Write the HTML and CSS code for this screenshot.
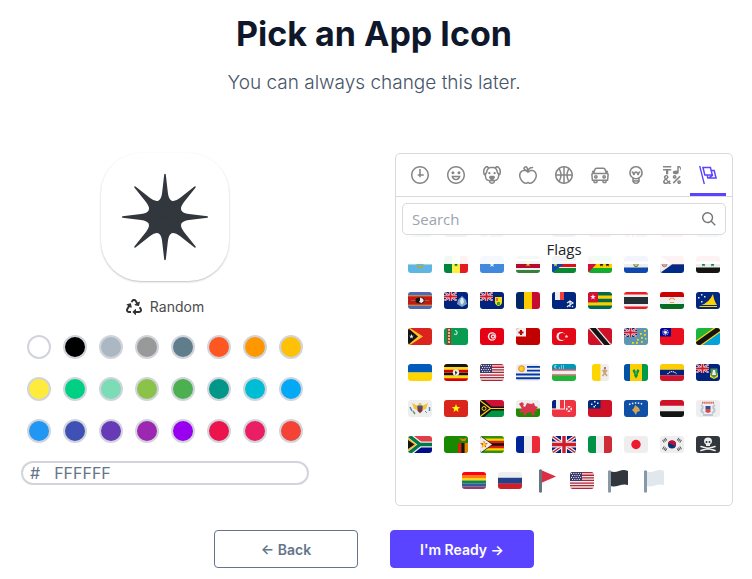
FILE: index.html
```html
<!DOCTYPE html>
<html lang="en">
<head>
    <meta charset="UTF-8">
    <meta name="viewport" content="width=device-width, initial-scale=1.0">
    <title>Pick an App Icon</title>
    <link rel="stylesheet" href="styles.css">
</head>
<body>

    <!-- Shapes shared by several flags -->
    <svg class="sprite" aria-hidden="true">
        <symbol id="uj" viewBox="0 0 24 17" preserveAspectRatio="none">
            <path fill="#00247d" d="M0 0h24v17H0z"/>
            <path stroke="#eee" stroke-width="3.6" d="M0 0l24 17M24 0L0 17"/>
            <path stroke="#cf1b2b" stroke-width="1.4" d="M0 0l24 17M24 0L0 17"/>
            <path stroke="#eee" stroke-width="6" d="M12 0v17M0 8.5h24"/>
            <path stroke="#cf1b2b" stroke-width="3.4" d="M12 0v17M0 8.5h24"/>
        </symbol>
        <symbol id="star" viewBox="-5 -5 10 10">
            <path d="M0-5l1.2 3.4 3.6.1L1.9.6l1 3.4L0 2l-2.9 2 1-3.4-2.9-2.1 3.6-.1z"/>
        </symbol>
        <symbol id="usa" viewBox="0 0 24 17">
            <path fill="#b22334" d="M0 0h24v1.3H0zM0 2.6h24v1.3H0zM0 5.2h24v1.3H0zM0 7.8h24v1.3H0zM0 10.4h24v1.3H0zM0 13h24v1.3H0zM0 15.7h24V17H0z"/>
            <path fill="#3c3b6e" d="M0 0h12v9.1H0z"/>
            <path stroke="#eee" stroke-width="1" stroke-dasharray="1 1.3" d="M1 1.5h10M2 3.5h9M1 5.5h10M2 7.5h9"/>
        </symbol>
    </svg>

    <div class="page">
        <header class="header">
            <h1>Pick an App Icon</h1>
            <p>You can always change this later.</p>
        </header>

        <main class="picker">
            <section class="design">
                <div class="app-icon">
                    <svg viewBox="-50 -50 100 100" width="100" height="100" fill="#31373d">
                        <circle r="17"/>
                        <g id="pair">
                            <path id="r" d="M0 1L-6.75-16.3Q-3.74-17.5-2.9-24L-.8-42.5Q0-44 .8-42.5L2.9-24Q3.74-17.5 6.75-16.3z"/>
                            <use href="#r" transform="rotate(45)"/>
                        </g>
                        <use href="#pair" transform="rotate(90)"/>
                        <use href="#pair" transform="rotate(180)"/>
                        <use href="#pair" transform="rotate(270)"/>
                    </svg>
                </div>

                <button class="random" type="button">
                    <svg viewBox="0 0 512 512" width="16" height="16" fill="#333"><path d="M184.561 261.903c3.232 13.997-12.123 24.635-24.068 17.168l-40.736-25.455-50.867 81.402C55.606 356.273 70.96 384 96.012 384H148c6.627 0 12 5.373 12 12v40c0 6.627-5.373 12-12 12H96.115c-75.334 0-121.302-83.048-81.408-146.88l50.822-81.388-40.725-25.448c-12.081-7.547-8.966-25.961 4.879-29.158l110.237-25.45c8.611-1.988 17.201 3.381 19.189 11.99l25.452 110.237zm98.561-182.915l41.289 66.076-40.74 25.457c-12.051 7.528-9 25.953 4.879 29.158l110.237 25.45c8.672 1.999 17.215-3.438 19.189-11.99l25.45-110.237c3.197-13.844-11.99-24.719-24.068-17.168l-40.687 25.424-41.263-66.082c-37.521-60.033-125.209-60.171-162.816 0l-17.963 28.766c-3.51 5.62-1.8 13.021 3.82 16.533l33.919 21.195c5.62 3.512 13.024 1.803 16.536-3.817l17.961-28.743c12.712-20.341 41.973-19.676 54.257-.022zM497.288 301.12l-27.515-44.065c-3.511-5.623-10.916-7.334-16.538-3.821l-33.861 21.159c-5.62 3.512-7.33 10.915-3.818 16.536l27.564 44.112c13.257 21.211-2.057 48.96-27.136 48.96H320V336.02c0-14.213-17.242-21.383-27.313-11.313l-80 79.981c-6.249 6.248-6.249 16.379 0 22.627l80 79.989C302.689 517.308 320 510.3 320 495.989V448h95.88c75.274 0 121.335-82.997 81.408-146.88z"/></svg>
                    Random
                </button>

                <div class="swatches">
                    <button class="swatch white" type="button" aria-label="White"></button>
                    <button class="swatch black" type="button" aria-label="Black"></button>
                    <button class="swatch silver" type="button" aria-label="Silver"></button>
                    <button class="swatch gray" type="button" aria-label="Gray"></button>
                    <button class="swatch slate" type="button" aria-label="Slate"></button>
                    <button class="swatch deep-orange" type="button" aria-label="Deep orange"></button>
                    <button class="swatch orange" type="button" aria-label="Orange"></button>
                    <button class="swatch amber" type="button" aria-label="Amber"></button>
                    <button class="swatch yellow" type="button" aria-label="Yellow"></button>
                    <button class="swatch emerald" type="button" aria-label="Emerald"></button>
                    <button class="swatch mint" type="button" aria-label="Mint"></button>
                    <button class="swatch lime" type="button" aria-label="Lime"></button>
                    <button class="swatch green" type="button" aria-label="Green"></button>
                    <button class="swatch teal" type="button" aria-label="Teal"></button>
                    <button class="swatch cyan" type="button" aria-label="Cyan"></button>
                    <button class="swatch sky" type="button" aria-label="Sky"></button>
                    <button class="swatch blue" type="button" aria-label="Blue"></button>
                    <button class="swatch indigo" type="button" aria-label="Indigo"></button>
                    <button class="swatch deep-purple" type="button" aria-label="Deep purple"></button>
                    <button class="swatch purple" type="button" aria-label="Purple"></button>
                    <button class="swatch violet" type="button" aria-label="Violet"></button>
                    <button class="swatch crimson" type="button" aria-label="Crimson"></button>
                    <button class="swatch pink" type="button" aria-label="Pink"></button>
                    <button class="swatch red" type="button" aria-label="Red"></button>
                </div>

                <div class="hex">
                    <label for="hex">#</label>
                    <input type="text" id="hex" value="FFFFFF">
                </div>
            </section>

            <section class="emoji-panel">
                <nav class="tabs">
                    <button class="tab" type="button" aria-label="Recent"><svg viewBox="0 0 24 24"><path d="M13 4h-2l-.001 7H9v2h2v2h2v-2h4v-2h-4z"/><path d="M12 0C5.373 0 0 5.373 0 12s5.373 12 12 12 12-5.373 12-12S18.627 0 12 0m0 22C6.486 22 2 17.514 2 12S6.486 2 12 2s10 4.486 10 10-4.486 10-10 10"/></svg></button>
                    <button class="tab" type="button" aria-label="Smileys"><svg viewBox="0 0 24 24"><path d="M12 0C5.373 0 0 5.373 0 12s5.373 12 12 12 12-5.373 12-12S18.627 0 12 0m0 22C6.486 22 2 17.514 2 12S6.486 2 12 2s10 4.486 10 10-4.486 10-10 10"/><path d="M8 7a2 2 0 1 0-.001 3.999A2 2 0 0 0 8 7M16 7a2 2 0 1 0-.001 3.999A2 2 0 0 0 16 7M15.232 15c-.693 1.195-1.87 2-3.349 2-1.477 0-2.655-.805-3.347-2H15m3-2H6a6 6 0 1 0 12 0"/></svg></button>
                    <button class="tab" type="button" aria-label="Animals"><svg viewBox="0 0 24 24"><path d="M15.5 8a1.5 1.5 0 1 0 .001 3.001A1.5 1.5 0 0 0 15.5 8M8.5 8a1.5 1.5 0 1 0 .001 3.001A1.5 1.5 0 0 0 8.5 8"/><path d="M18.933 0h-.027c-.97 0-2.138.787-3.018 1.497-1.274-.374-2.612-.51-3.887-.51-1.285 0-2.616.133-3.874.517C7.245.79 6.069 0 5.093 0h-.027C3.352 0 .07 2.67.002 7.026c-.039 2.479.276 4.238 1.04 5.013.254.258.882.677 1.295.882.191 3.177.922 5.238 2.536 6.38.897.637 2.187.949 3.2 1.102C8.04 20.6 8 20.795 8 21c0 1.773 2.35 3 4 3 1.648 0 4-1.227 4-3 0-.201-.038-.393-.072-.586 2.573-.385 5.435-1.877 5.925-7.587.396-.22.887-.568 1.104-.788.763-.774 1.079-2.534 1.04-5.013C23.929 2.67 20.646 0 18.933 0M3.223 9.135c-.237.281-.837 1.155-.884 1.238-.15-.41-.368-1.349-.337-3.291.051-3.281 2.478-4.972 3.091-5.031.256.015.731.27 1.265.646-1.11 1.171-2.275 2.915-2.352 5.125-.133.546-.398.858-.783 1.313M12 22c-.901 0-1.954-.693-2-1 0-.654.475-1.236 1-1.602V20a1 1 0 1 0 2 0v-.602c.524.365 1 .947 1 1.602-.046.307-1.099 1-2 1m3-3.48v.02a4.752 4.752 0 0 0-1.262-1.02c1.092-.516 2.239-1.334 2.239-2.217 0-1.842-1.781-2.195-3.977-2.195-2.196 0-3.978.354-3.978 2.195 0 .883 1.148 1.701 2.238 2.217A4.8 4.8 0 0 0 9 18.539v-.025c-1-.076-2.182-.281-2.973-.842-1.301-.92-1.838-3.045-1.853-6.478l.023-.041c.496-.826 1.49-1.45 1.804-3.102 0-2.047 1.357-3.631 2.362-4.522C9.37 3.178 10.555 3 11.948 3c1.447 0 2.685.192 3.733.57 1 .9 2.316 2.465 2.316 4.48.313 1.651 1.307 2.275 1.803 3.102.035.058.068.117.102.178-.059 5.967-1.949 7.01-4.902 7.19m6.628-8.202c-.037-.065-.074-.13-.113-.195a7.587 7.587 0 0 0-.739-.987c-.385-.455-.648-.768-.782-1.313-.076-2.209-1.241-3.954-2.353-5.124.531-.376 1.004-.63 1.261-.647.636.071 3.044 1.764 3.096 5.031.027 1.81-.347 3.218-.37 3.235"/></svg></button>
                    <button class="tab" type="button" aria-label="Food"><svg viewBox="0 0 24 24"><path d="M17 4.978c-1.838 0-2.876.396-3.68.934.513-1.172 1.768-2.934 4.68-2.934a1 1 0 0 0 0-2c-2.921 0-4.629 1.365-5.547 2.512-.064.078-.119.162-.18.244C11.73 1.838 10.798.023 9.207.023 8.579.022 7.85.306 7 .978 5.027 2.54 5.329 3.902 6.492 4.999 3.609 5.222 0 7.352 0 12.969c0 4.582 4.961 11.009 9 11.009 1.975 0 2.371-.486 3-1 .629.514 1.025 1 3 1 4.039 0 9-6.418 9-11 0-5.953-4.055-8-7-8M8.242 2.546c.641-.508.943-.523.965-.523.426.169.975 1.405 1.357 3.055-1.527-.629-2.741-1.352-2.98-1.846.059-.112.241-.356.658-.686M15 21.978c-1.08 0-1.21-.109-1.559-.402l-.176-.146c-.367-.302-.816-.452-1.266-.452s-.898.15-1.266.452l-.176.146c-.347.292-.477.402-1.557.402-2.813 0-7-5.389-7-9.009 0-5.823 4.488-5.991 5-5.991 1.939 0 2.484.471 3.387 1.251l.323.276a1.995 1.995 0 0 0 2.58 0l.323-.276c.902-.78 1.447-1.251 3.387-1.251.512 0 5 .168 5 6 0 3.617-4.187 9-7 9"/></svg></button>
                    <button class="tab" type="button" aria-label="Activities"><svg viewBox="0 0 24 24"><path d="M12 0C5.373 0 0 5.372 0 12c0 6.627 5.373 12 12 12 6.628 0 12-5.373 12-12 0-6.628-5.372-12-12-12m9.949 11H17.05c.224-2.527 1.232-4.773 1.968-6.113A9.966 9.966 0 0 1 21.949 11M13 11V2.051a9.945 9.945 0 0 1 4.432 1.564c-.858 1.491-2.156 4.22-2.392 7.385H13zm-2 0H8.961c-.238-3.165-1.536-5.894-2.393-7.385A9.95 9.95 0 0 1 11 2.051V11zm0 2v8.949a9.937 9.937 0 0 1-4.432-1.564c.857-1.492 2.155-4.221 2.393-7.385H11zm4.04 0c.236 3.164 1.534 5.893 2.392 7.385A9.92 9.92 0 0 1 13 21.949V13h2.04zM4.982 4.887C5.718 6.227 6.726 8.473 6.951 11h-4.9a9.977 9.977 0 0 1 2.931-6.113M2.051 13h4.9c-.226 2.527-1.233 4.771-1.969 6.113A9.972 9.972 0 0 1 2.051 13m16.967 6.113c-.735-1.342-1.744-3.586-1.968-6.113h4.899a9.961 9.961 0 0 1-2.931 6.113"/></svg></button>
                    <button class="tab" type="button" aria-label="Travel"><svg viewBox="0 0 24 24"><path d="M6.5 12C5.122 12 4 13.121 4 14.5S5.122 17 6.5 17 9 15.879 9 14.5 7.878 12 6.5 12m0 3c-.275 0-.5-.225-.5-.5s.225-.5.5-.5.5.225.5.5-.225.5-.5.5M17.5 12c-1.378 0-2.5 1.121-2.5 2.5s1.122 2.5 2.5 2.5 2.5-1.121 2.5-2.5-1.122-2.5-2.5-2.5m0 3c-.275 0-.5-.225-.5-.5s.225-.5.5-.5.5.225.5.5-.225.5-.5.5"/><path d="M22.482 9.494l-1.039-.346L21.4 9h.6c.552 0 1-.439 1-.992 0-.006-.003-.008-.003-.008H23c0-1-.889-2-1.984-2h-.642l-.731-1.717C19.262 3.012 18.091 2 16.764 2H7.236C5.909 2 4.738 3.012 4.357 4.283L3.626 6h-.642C1.889 6 1 7 1 8h.003S1 8.002 1 8.008C1 8.561 1.448 9 2 9h.6l-.043.148-1.039.346a2.001 2.001 0 0 0-1.359 2.097l.751 7.508a1 1 0 0 0 .994.901H3v1c0 1.103.896 2 2 2h2c1.104 0 2-.897 2-2v-1h6v1c0 1.103.896 2 2 2h2c1.104 0 2-.897 2-2v-1h1.096a.999.999 0 0 0 .994-.901l.751-7.508a2.001 2.001 0 0 0-1.359-2.097M6.273 4.857C6.402 4.43 6.788 4 7.236 4h9.527c.448 0 .834.43.963.857L19.313 9H4.688l1.585-4.143zM7 21H5v-1h2v1zm12 0h-2v-1h2v1zm2.189-3H2.811l-.662-6.607L3 11h18l.852.393L21.189 18z"/></svg></button>
                    <button class="tab" type="button" aria-label="Objects"><svg viewBox="0 0 24 24"><path d="M12 0a9 9 0 0 0-5 16.482V21s2.035 3 5 3 5-3 5-3v-4.518A9 9 0 0 0 12 0zm0 2c3.86 0 7 3.141 7 7s-3.14 7-7 7-7-3.141-7-7 3.14-7 7-7zM9 17.477c.94.332 1.946.523 3 .523s2.06-.19 3-.523v.834c-.91.436-1.925.689-3 .689a6.924 6.924 0 0 1-3-.69v-.833zm.236 3.07A8.854 8.854 0 0 0 12 21c.965 0 1.888-.167 2.758-.451C14.155 21.173 13.153 22 12 22c-1.102 0-2.117-.789-2.764-1.453z"/><path d="M14.745 12.449h-.004c-.852-.024-1.188-.858-1.577-1.824-.421-1.061-.703-1.561-1.182-1.566h-.009c-.481 0-.783.497-1.235 1.537-.436.982-.801 1.811-1.636 1.791l-.276-.043c-.565-.171-.853-.691-1.284-1.794-.125-.313-.202-.632-.27-.913-.051-.213-.127-.53-.195-.634C7.067 9.004 7.039 9 6.99 9A1 1 0 0 1 7 7h.01c1.662.017 2.015 1.373 2.198 2.134.486-.981 1.304-2.058 2.797-2.075 1.531.018 2.28 1.153 2.731 2.141l.002-.008C14.944 8.424 15.327 7 16.979 7h.032A1 1 0 1 1 17 9h-.011c-.149.076-.256.474-.319.709a6.484 6.484 0 0 1-.311.951c-.429.973-.79 1.789-1.614 1.789"/></svg></button>
                    <button class="tab" type="button" aria-label="Symbols"><svg viewBox="0 0 24 24"><path d="M0 0h11v2H0zM4 11h3V6h4V4H0v2h4zM15.5 17c1.381 0 2.5-1.116 2.5-2.493s-1.119-2.493-2.5-2.493S13 13.13 13 14.507 14.119 17 15.5 17m0-2.986c.276 0 .5.222.5.493 0 .272-.224.493-.5.493s-.5-.221-.5-.493.224-.493.5-.493M21.5 19.014c-1.381 0-2.5 1.116-2.5 2.493S20.119 24 21.5 24s2.5-1.116 2.5-2.493-1.119-2.493-2.5-2.493m0 2.986a.497.497 0 0 1-.5-.493c0-.271.224-.493.5-.493s.5.222.5.493a.497.497 0 0 1-.5.493M22 13l-9 9 1.513 1.5 8.99-9.009zM17 11c2.209 0 4-1.119 4-2.5V2s.985-.161 1.498.949C23.01 4.055 23 6 23 6s1-1.119 1-3.135C24-.02 21 0 21 0h-2v6.347A5.853 5.853 0 0 0 17 6c-2.209 0-4 1.119-4 2.5s1.791 2.5 4 2.5M10.297 20.482l-1.475-1.585a47.54 47.54 0 0 1-1.442 1.129c-.307-.288-.989-1.016-2.045-2.183.902-.836 1.479-1.466 1.729-1.892s.376-.871.376-1.336c0-.592-.273-1.178-.818-1.759-.546-.581-1.329-.871-2.349-.871-1.008 0-1.79.293-2.344.879-.556.587-.832 1.181-.832 1.784 0 .813.419 1.748 1.256 2.805-.847.614-1.444 1.208-1.794 1.784a3.465 3.465 0 0 0-.523 1.833c0 .857.308 1.56.924 2.107.616.549 1.423.823 2.42.823 1.173 0 2.444-.379 3.813-1.137L8.235 24h2.819l-2.09-2.383 1.333-1.135zm-6.736-6.389a1.02 1.02 0 0 1 .73-.286c.31 0 .559.085.747.254a.849.849 0 0 1 .283.659c0 .518-.419 1.112-1.257 1.784-.536-.651-.805-1.231-.805-1.742a.901.901 0 0 1 .302-.669M3.74 22c-.427 0-.778-.116-1.057-.349-.279-.232-.418-.487-.418-.766 0-.594.509-1.288 1.527-2.083.968 1.134 1.717 1.946 2.248 2.438-.921.507-1.686.76-2.3.76"/></svg></button>
                    <button class="tab active" type="button" aria-label="Flags"><svg viewBox="0 0 24 24"><path d="M0 0l6.084 24H8L1.916 0zM21 5h-4l-1-4H4l3 12h3l1 4h13L21 5zM6.563 3h7.875l2 8H8.563l-2-8zm8.832 10l-2.856 1.904L12.063 13h3.332zM19 13l-1.5-6h1.938l2 8H16l3-2z"/></svg></button>
                </nav>

                <div class="search">
                    <input type="text" placeholder="Search" aria-label="Search">
                    <svg viewBox="0 0 20 20" width="14" height="14" fill="#777"><path d="M12.9 14.32a8 8 0 1 1 1.41-1.41l5.35 5.33-1.42 1.42-5.33-5.34zM8 14A6 6 0 1 0 8 2a6 6 0 0 0 0 12z"/></svg>
                </div>

                <div class="list">
                    <h2 class="category">Flags</h2>
                    <div class="emojis">
                        <!-- row hidden behind the category label -->
                        <button class="emoji" type="button" aria-label="Seychelles"><svg viewBox="0 0 24 17"><path fill="#141f8f" d="M0 0h8L0 17z"/><path fill="#007a3d" d="M0 17l24-5v5z"/></svg></button>
                        <button class="emoji" type="button" aria-label="Sudan"><svg viewBox="0 0 24 17"><path fill="#d21034" d="M0 0h24v6H0z"/><path fill="#141414" d="M0 11h24v6H0z"/></svg></button>
                        <button class="emoji" type="button" aria-label="Sweden"><svg viewBox="0 0 24 17"><path fill="#1b6aa5" d="M0 0h24v17H0z"/><path fill="#fecd00" d="M7 0h4v17H7zM0 7h24v3H0z"/></svg></button>
                        <button class="emoji" type="button" aria-label="Singapore"><svg viewBox="0 0 24 17"><path fill="#ed2939" d="M0 0h24v8H0z"/></svg></button>
                        <button class="emoji" type="button" aria-label="St. Helena"><svg viewBox="0 0 24 17"><path fill="#00247d" d="M0 0h24v17H0z"/></svg></button>
                        <button class="emoji" type="button" aria-label="Slovenia"><svg viewBox="0 0 24 17"><path fill="#005da4" d="M0 6h24v5H0z"/><path fill="#ed1c23" d="M0 11h24v6H0z"/></svg></button>
                        <button class="emoji" type="button" aria-label="Svalbard"><svg viewBox="0 0 24 17"><path fill="#ef2b2d" d="M0 0h24v17H0z"/><path fill="#eee" d="M6 0h6v17H6z"/><path fill="#002868" d="M8 0h2v17H8z"/></svg></button>
                        <button class="emoji" type="button" aria-label="Slovakia"><svg viewBox="0 0 24 17"><path fill="#0b4ea2" d="M0 6h24v5H0z"/><path fill="#ee1c25" d="M0 11h24v6H0z"/></svg></button>
                        <button class="emoji" type="button" aria-label="Sierra Leone"><svg viewBox="0 0 24 17"><path fill="#1eb53a" d="M0 0h24v6H0z"/><path fill="#0072c6" d="M0 11h24v6H0z"/></svg></button>

                        <button class="emoji" type="button" aria-label="San Marino"><svg viewBox="0 0 24 17"><path fill="#5eb6e4" d="M0 8.5h24V17H0z"/><circle cx="12" cy="8.5" r="3.5" fill="#8fb27d"/><circle cx="12" cy="8" r="2" fill="#5eb6e4"/><path stroke="#c9a02b" d="M9 11q3 2 6 0" fill="none"/></svg></button>
                        <button class="emoji" type="button" aria-label="Senegal"><svg viewBox="0 0 24 17"><path fill="#00853f" d="M0 0h8v17H0z"/><path fill="#fdef42" d="M8 0h8v17H8z"/><path fill="#e31b23" d="M16 0h8v17h-8z"/><use href="#star" x="9.5" y="6" width="5" height="5" fill="#00853f"/></svg></button>
                        <button class="emoji" type="button" aria-label="Somalia"><svg viewBox="0 0 24 17"><path fill="#4189dd" d="M0 0h24v17H0z"/><use href="#star" x="9" y="5.5" width="6" height="6" fill="#eee"/></svg></button>
                        <button class="emoji" type="button" aria-label="Suriname"><svg viewBox="0 0 24 17"><path fill="#377e3f" d="M0 0h24v3H0zM0 14h24v3H0z"/><path fill="#b40a2d" d="M0 5h24v7H0z"/><use href="#star" x="9" y="5" width="6" height="6" fill="#ecc81d"/></svg></button>
                        <button class="emoji" type="button" aria-label="South Sudan"><svg viewBox="0 0 24 17"><path fill="#141414" d="M0 0h24v5H0z"/><path fill="#da121a" d="M0 6h24v5H0z"/><path fill="#078930" d="M0 12h24v5H0z"/><path fill="#0f47af" d="M0 0l11 8.5L0 17z"/><use href="#star" x="1" y="6" width="5" height="5" fill="#fcdd09"/></svg></button>
                        <button class="emoji" type="button" aria-label="São Tomé"><svg viewBox="0 0 24 17"><path fill="#12ad2b" d="M0 0h24v17H0z"/><path fill="#ffce00" d="M0 5h24v7H0z"/><path fill="#d21034" d="M0 0l8 8.5L0 17z"/><use href="#star" x="11" y="6" width="5" height="5" fill="#141414"/><use href="#star" x="17" y="6" width="5" height="5" fill="#141414"/></svg></button>
                        <button class="emoji" type="button" aria-label="El Salvador"><svg viewBox="0 0 24 17"><path fill="#0f47af" d="M0 0h24v5.5H0zM0 11.5h24V17H0z"/><circle cx="12" cy="8.5" r="2.2" fill="#d3c35a" stroke="#4d8c58"/></svg></button>
                        <button class="emoji" type="button" aria-label="Sint Maarten"><svg viewBox="0 0 24 17"><path fill="#dc171d" d="M0 0h24v8.5H0z"/><path fill="#012a87" d="M0 8.5h24V17H0z"/><path fill="#eee" d="M0 0l12 8.5L0 17z"/><circle cx="4.5" cy="8.5" r="2.3" fill="#b8a7c9" stroke="#d9774c"/></svg></button>
                        <button class="emoji" type="button" aria-label="Syria"><svg viewBox="0 0 24 17"><path fill="#ce1126" d="M0 0h24v5.5H0z"/><path fill="#141414" d="M0 11.5h24V17H0z"/><use href="#star" x="5" y="6" width="5" height="5" fill="#007a3d"/><use href="#star" x="14" y="6" width="5" height="5" fill="#007a3d"/></svg></button>

                        <button class="emoji" type="button" aria-label="Eswatini"><svg viewBox="0 0 24 17"><path fill="#5067b1" d="M0 0h24v17H0z"/><path fill="#ffb92e" d="M0 3.5h24v10H0z"/><path fill="#c41a14" d="M0 4.2h24v8.6H0z"/><path stroke="#8e6b45" d="M3 8.5h18"/><ellipse cx="12" cy="8.5" rx="4.5" ry="3" fill="#141414"/><path fill="#eee" d="M12 5.5q4.500 1 3.500 4l-2 1.500-2.500-1 1-1.500z"/></svg></button>
                        <button class="emoji" type="button" aria-label="Tristan da Cunha"><svg viewBox="0 0 24 17"><path fill="#00247d" d="M0 0h24v17H0z"/><use href="#uj" width="13" height="9"/><path fill="#7ba3c9" d="M14 8l4-4 4 4 1 4-5 3-5-3z"/><path fill="#dfe8ee" d="M17 6h2l1 4-2 3-2-3z"/></svg></button>
                        <button class="emoji" type="button" aria-label="Turks and Caicos"><svg viewBox="0 0 24 17"><path fill="#00247d" d="M0 0h24v17H0z"/><use href="#uj" width="13" height="9"/><path fill="#fcdd09" d="M15 5h7v5q0 3-3.5 4Q15 13 15 10z"/><path fill="#d9762f" d="M16 6h2v3h-2z"/><path fill="#36a34a" d="M17 10h3v3h-3z"/></svg></button>
                        <button class="emoji" type="button" aria-label="Chad"><svg viewBox="0 0 24 17"><path fill="#002664" d="M0 0h8v17H0z"/><path fill="#fecb00" d="M8 0h8v17H8z"/><path fill="#c60c30" d="M16 0h8v17h-8z"/></svg></button>
                        <button class="emoji" type="button" aria-label="French Southern Territories"><svg viewBox="0 0 24 17"><path fill="#00267f" d="M0 0h24v17H0z"/><path fill="#eee" d="M3 0h9v8H3z"/><path fill="#f03f3f" d="M8 0h4v8H8z"/><path stroke="#eee" stroke-width="1.2" fill="none" d="M15 11l3-2 3 2-5 3M18 9v6M15 14l1 1M20 14l1 1"/></svg></button>
                        <button class="emoji" type="button" aria-label="Togo"><svg viewBox="0 0 24 17"><path fill="#006a4e" d="M0 0h24v17H0z"/><path fill="#ffce00" d="M0 3.4h24v3.4H0zM0 10.2h24v3.4H0z"/><path fill="#d21034" d="M0 0h10v10.2H0z"/><use href="#star" x="2" y="2" width="6" height="6" fill="#eee"/></svg></button>
                        <button class="emoji" type="button" aria-label="Thailand"><svg viewBox="0 0 24 17"><path fill="#eb1c24" d="M0 0h24v2.5H0zM0 14.5h24V17H0z"/><path fill="#272f36" d="M0 5h24v7H0z"/></svg></button>
                        <button class="emoji" type="button" aria-label="Tajikistan"><svg viewBox="0 0 24 17"><path fill="#c00" d="M0 0h24v5H0z"/><path fill="#066b24" d="M0 12h24v5H0z"/><path stroke="#ea9d4b" stroke-width="1.2" fill="none" d="M9 8q3-4 6 0M10 10.5h4"/></svg></button>
                        <button class="emoji" type="button" aria-label="Tokelau"><svg viewBox="0 0 24 17"><path fill="#00267f" d="M0 0h24v17H0z"/><path fill="#fed100" d="M17 2q1 7 4 11H5Q13 11 17 2zM3 14h18v1H4z"/><path fill="#eee" d="M5 2h1.5v1.5H5zM2 5h1.5v1.5H2zM8 4h1.5v1.5H8zM5 9h1.5v1.5H5z"/></svg></button>

                        <button class="emoji" type="button" aria-label="Timor-Leste"><svg viewBox="0 0 24 17"><path fill="#dc241f" d="M0 0h24v17H0z"/><path fill="#ffc726" d="M0 0h2l13 8.5L2 17H0z"/><path fill="#141414" d="M0 0l10 8.5L0 17z"/><use href="#star" x="1" y="6" width="5" height="5" fill="#eee"/></svg></button>
                        <button class="emoji" type="button" aria-label="Turkmenistan"><svg viewBox="0 0 24 17"><path fill="#089c50" d="M0 0h24v17H0z"/><path fill="#a43a2c" d="M3 0h4v17H3z"/><path stroke="#d9b98a" stroke-width="2" stroke-dasharray="2 1" d="M5 1v15"/><path stroke="#eee" fill="none" d="M11 2.5q3 0 2 3.5-1 1-3 0"/></svg></button>
                        <button class="emoji" type="button" aria-label="Tunisia"><svg viewBox="0 0 24 17"><path fill="#e70013" d="M0 0h24v17H0z"/><circle cx="12" cy="8.5" r="4.2" fill="#eee"/><circle cx="12.3" cy="8.5" r="3" fill="#e70013"/><circle cx="13" cy="8.5" r="2.2" fill="#eee"/><use href="#star" x="11.5" y="7" width="3" height="3" fill="#e70013"/></svg></button>
                        <button class="emoji" type="button" aria-label="Tonga"><svg viewBox="0 0 24 17"><path fill="#c10000" d="M0 0h24v17H0z"/><path fill="#eee" d="M0 0h10v8.5H0z"/><path fill="#c10000" d="M4 2h2v5H4zM2.5 3.5h5v2h-5z"/></svg></button>
                        <button class="emoji" type="button" aria-label="Turkey"><svg viewBox="0 0 24 17"><path fill="#e30917" d="M0 0h24v17H0z"/><circle cx="9" cy="8.5" r="4.5" fill="#eee"/><circle cx="10.3" cy="8.5" r="3.6" fill="#e30917"/><use href="#star" x="12.5" y="6.5" width="4" height="4" fill="#eee"/></svg></button>
                        <button class="emoji" type="button" aria-label="Trinidad and Tobago"><svg viewBox="0 0 24 17"><path fill="#ce1126" d="M0 0h24v17H0z"/><path stroke="#eee" stroke-width="7" d="M3-2l18 21"/><path stroke="#141414" stroke-width="4.6" d="M3-2l18 21"/></svg></button>
                        <button class="emoji" type="button" aria-label="Tuvalu"><svg viewBox="0 0 24 17"><path fill="#5b97b1" d="M0 0h24v17H0z"/><use href="#uj" width="13" height="9"/><path fill="#fcdd09" d="M20 2h1.8v1.8H20zM16 5h1.8v1.8H16zM20 6h1.8v1.8H20zM17 9h1.8v1.8H17zM13 11h1.8v1.8H13zM17 13h1.8v1.8H17zM8 14h1.8v1.8H8zM12 14h1.8v1.8H12zM21 10h1.5v1.5H21z"/></svg></button>
                        <button class="emoji" type="button" aria-label="Taiwan"><svg viewBox="0 0 24 17"><path fill="#ea0f1e" d="M0 0h24v17H0z"/><path fill="#000095" d="M0 0h11v8.5H0z"/><circle cx="5.5" cy="4.3" r="2.6" fill="none" stroke="#bfc5e6" stroke-width="1.2" stroke-dasharray="1 .7"/><circle cx="5.5" cy="4.3" r="1.6" fill="#eee"/></svg></button>
                        <button class="emoji" type="button" aria-label="Tanzania"><svg viewBox="0 0 24 17"><path fill="#1eb53a" d="M0 0h24L0 17z"/><path fill="#00a3dd" d="M24 0v17H0z"/><path stroke="#fcd116" stroke-width="7.5" d="M-2 18.4L26-1.4"/><path stroke="#141414" stroke-width="5" d="M-2 18.4L26-1.4"/></svg></button>

                        <button class="emoji" type="button" aria-label="Ukraine"><svg viewBox="0 0 24 17"><path fill="#005bbb" d="M0 0h24v8.5H0z"/><path fill="#ffd500" d="M0 8.5h24V17H0z"/></svg></button>
                        <button class="emoji" type="button" aria-label="Uganda"><svg viewBox="0 0 24 17"><path fill="#141414" d="M0 0h24v3H0zM0 8.5h24v3H0z"/><path fill="#fcdc04" d="M0 3h24v2.7H0zM0 11.5h24v2.7H0z"/><path fill="#d90000" d="M0 5.7h24v2.8H0zM0 14.2h24V17H0z"/><circle cx="12" cy="8.5" r="3.2" fill="#eee"/><path stroke="#555" d="M11 7l2 1.5-1.5 2"/></svg></button>
                        <button class="emoji" type="button" aria-label="United States"><svg viewBox="0 0 24 17"><use href="#usa"/></svg></button>
                        <button class="emoji" type="button" aria-label="Uruguay"><svg viewBox="0 0 24 17"><path fill="#0038a8" d="M11 1.9h13v1.9H11zM11 5.7h13v1.9H11zM0 9.5h24v1.9H0zM0 13.3h24v1.9H0z"/><circle cx="5.5" cy="4.7" r="2.8" fill="#fcd116" stroke="#e9964c" stroke-width="1.2"/></svg></button>
                        <button class="emoji" type="button" aria-label="Uzbekistan"><svg viewBox="0 0 24 17"><path fill="#0099b5" d="M0 0h24v5.5H0z"/><path fill="#ce1126" d="M0 5.5h24v1H0zM0 10.5h24v1H0z"/><path fill="#1eb53a" d="M0 11.5h24V17H0z"/><circle cx="4" cy="2.8" r="1.7" fill="#eee"/><circle cx="4.8" cy="2.8" r="1.5" fill="#0099b5"/><path stroke="#eee" stroke-dasharray="1 1" d="M7 4h6M9 2h4"/></svg></button>
                        <button class="emoji narrow" type="button" aria-label="Vatican City"><svg viewBox="0 0 17 17"><path fill="#ffd500" d="M0 0h8.5v17H0z"/><path stroke="#c9a37a" stroke-width="1.6" d="M10.5 6l4.5 6M15 6l-4.5 6M12.7 4v5"/><path fill="#b9716a" d="M12 3h2v2h-2z"/></svg></button>
                        <button class="emoji" type="button" aria-label="St. Vincent"><svg viewBox="0 0 24 17"><path fill="#0053a5" d="M0 0h6v17H0z"/><path fill="#ffce00" d="M6 0h12v17H6z"/><path fill="#009b48" d="M18 0h6v17h-6zM8.5 6.500l2-1.500 1.500 3-1.500 3zM15.500 6.500l-2-1.500-1.500 3 1.500 3zM12 9l2 2.500-2 3-2-3z"/></svg></button>
                        <button class="emoji" type="button" aria-label="Venezuela"><svg viewBox="0 0 24 17"><path fill="#fc0" d="M0 0h24v5.7H0z"/><path fill="#00247d" d="M0 5.7h24v5.6H0z"/><path fill="#cf142b" d="M0 11.3h24V17H0z"/><path stroke="#eee" stroke-width="1.2" stroke-dasharray="1.2 .8" fill="none" d="M7.5 10q4.5-5 9 0"/></svg></button>
                        <button class="emoji" type="button" aria-label="British Virgin Islands"><svg viewBox="0 0 24 17"><path fill="#00247d" d="M0 0h24v17H0z"/><use href="#uj" width="13" height="9"/><path fill="#fcdd09" d="M14 9h8v4l-4 2-4-2z"/><path fill="#4f8f5c" d="M14.5 4.5h7V11L18 14l-3.5-3z"/><path fill="#eee" d="M17 6h2l1 5h-4z"/></svg></button>

                        <button class="emoji" type="button" aria-label="U.S. Virgin Islands"><svg viewBox="0 0 24 17"><path fill="#f4c33c" d="M4 3l6 3 1-3h2l1 3 6-3-2 6-4 1-2 4-2-4-4-1z"/><path fill="#7a3a4a" d="M9.5 6h5v5L12 13l-2.5-2z"/><path fill="#3a5a9c" d="M9.5 5.5h5v2h-5z"/><path stroke="#4a82bf" stroke-width="1.4" d="M2 7l2 4M21.5 7v4"/><path stroke="#5b9b5b" stroke-width="1.4" d="M5 11l2 3"/><path stroke="#5a8fc9" d="M17 11l2 2"/></svg></button>
                        <button class="emoji" type="button" aria-label="Vietnam"><svg viewBox="0 0 24 17"><path fill="#da251d" d="M0 0h24v17H0z"/><use href="#star" x="7.5" y="4" width="9" height="9" fill="#ff0"/></svg></button>
                        <button class="emoji" type="button" aria-label="Vanuatu"><svg viewBox="0 0 24 17"><path fill="#d21034" d="M0 0h24v8.5H0z"/><path fill="#009543" d="M0 8.5h24V17H0z"/><path stroke="#141414" stroke-width="4" fill="none" d="M0-1l11 9.5L0 18M11 8.5h13"/><path fill="#141414" d="M0 0l10 8.5L0 17z"/><path stroke="#fdce12" stroke-width="1.2" fill="none" d="M0 .5l10.5 8L0 16.5M10.5 8.5H24"/><circle cx="4" cy="8.5" r="2" fill="none" stroke="#fdce12"/></svg></button>
                        <button class="emoji" type="button" aria-label="Wales"><svg viewBox="0 0 24 17"><path fill="#1f8b00" d="M0 8.5h24V17H0z"/><path fill="#d8374b" d="M3 4l3-2 2 2-1 2 2 1 2-4 4 1 3-1 1 3 3 1-2 2 1 3-3-1 1 4h-3l-1-3-4 1-1 2H7l1-3-3 1-2-2 3-2-1-2z"/></svg></button>
                        <button class="emoji" type="button" aria-label="Wallis and Futuna"><svg viewBox="0 0 24 17"><path fill="#ef3340" d="M0 0h24v17H0z"/><path fill="#00267f" d="M0 0h4v8.5H0z"/><path fill="#eee" d="M4 0h4v8.5H4zM12 0h1v9.5H0v-1h12z"/><circle cx="17" cy="9" r="3" fill="#eee"/><path stroke="#ef3340" stroke-width="1.4" d="M14.5 6.5l5 5M19.5 6.5l-5 5"/></svg></button>
                        <button class="emoji" type="button" aria-label="Samoa"><svg viewBox="0 0 24 17"><path fill="#ce1126" d="M0 0h24v17H0z"/><path fill="#002b7f" d="M0 0h12.5v8.5H0z"/><path fill="#eee" d="M6 1h1.5v1.5H6zM3 3.5h1.5V5H3zM9 2.5h1.5V4H9zM7 5h1v1H7zM5.5 6h1.5v1.5H5.5z"/></svg></button>
                        <button class="emoji" type="button" aria-label="Kosovo"><svg viewBox="0 0 24 17"><path fill="#0f4fa5" d="M0 0h24v17H0z"/><path fill="#d0a650" d="M11 5l4 3 1 3-3 1-1 3-2-3-2-2 2-2z"/><path stroke="#eee" stroke-width="1.5" stroke-dasharray="1.5 1.5" fill="none" d="M5 4.5q7-3 14.5 0"/></svg></button>
                        <button class="emoji" type="button" aria-label="Yemen"><svg viewBox="0 0 24 17"><path fill="#ce1126" d="M0 0h24v5.7H0z"/><path fill="#141414" d="M0 11.3h24V17H0z"/></svg></button>
                        <button class="emoji" type="button" aria-label="Mayotte"><svg viewBox="0 0 24 17"><path stroke="#e0674f" stroke-width="2" stroke-dasharray="1.5 .6" d="M6 2.8h12"/><path fill="#2b50a8" d="M9.5 6h5v3h-5z"/><path fill="#d9483b" d="M9.5 9h5v3l-2.5 1-2.5-1z"/><path stroke="#b9c7d6" stroke-width="2" fill="none" d="M5 5q3 2 1 4t2 4M19 5q-3 2-1 4t-2 4M7 15h10"/></svg></button>

                        <button class="emoji" type="button" aria-label="South Africa"><svg viewBox="0 0 24 17"><path fill="#e23d4b" d="M0 0h24v6H0z"/><path fill="#000c8a" d="M0 11h24v6H0z"/><path stroke="#eee" stroke-width="6" fill="none" d="M0-1l12 9.5L0 18M12 8.5h12"/><path fill="#ffb915" d="M0 2l8.5 6.5L0 15z"/><path stroke="#007847" stroke-width="3.4" fill="none" d="M0-1l12 9.5L0 18M12 8.5h12"/><path fill="#141414" d="M0 4l6.5 4.5L0 13z"/></svg></button>
                        <button class="emoji" type="button" aria-label="Zambia"><svg viewBox="0 0 24 17"><path fill="#198a00" d="M0 0h24v17H0z"/><path fill="#de2010" d="M14 7h3.4v10H14z"/><path fill="#141414" d="M17.4 7h3.3v10h-3.3z"/><path fill="#ef7d00" d="M20.7 7H24v10h-3.3zM15 2l4 1 4-1-2 3h-3z"/></svg></button>
                        <button class="emoji" type="button" aria-label="Zimbabwe"><svg viewBox="0 0 24 17"><path fill="#319208" d="M0 0h24v17H0z"/><path fill="#ffd200" d="M0 2.4h24v12.2H0z"/><path fill="#de2010" d="M0 4.8h24v7.4H0z"/><path fill="#141414" d="M0 7.2h24v2.6H0z"/><path fill="#141414" d="M0 0h1l12 8.5L1 17H0z"/><path fill="#eee" d="M0 0l12 8.5L0 17z"/><use href="#star" x="0" y="4.5" width="8" height="8" fill="#de2010"/><path fill="#fbd116" d="M3 5l3 3-1 3H2l1-3z"/></svg></button>
                        <button class="emoji" type="button" aria-label="France"><svg viewBox="0 0 24 17"><path fill="#002495" d="M0 0h8v17H0z"/><path fill="#ed2939" d="M16 0h8v17h-8z"/></svg></button>
                        <button class="emoji" type="button" aria-label="United Kingdom"><svg viewBox="0 0 24 17"><use href="#uj" width="24" height="17"/></svg></button>
                        <button class="emoji" type="button" aria-label="Italy"><svg viewBox="0 0 24 17"><path fill="#009246" d="M0 0h8v17H0z"/><path fill="#ce2b37" d="M16 0h8v17h-8z"/></svg></button>
                        <button class="emoji" type="button" aria-label="Japan"><svg viewBox="0 0 24 17"><circle cx="12" cy="8.5" r="4.7" fill="#ed1b2f"/></svg></button>
                        <button class="emoji" type="button" aria-label="South Korea"><svg viewBox="0 0 24 17"><circle cx="12" cy="8.5" r="4" fill="#003478"/><path fill="#c60c30" d="M8 8.5a4 4 0 0 1 8 0q-1 2-4 0-3-2-4 0z"/><path stroke="#555" stroke-width="3" stroke-dasharray="1 .6" d="M3 5.500L6.500 3M21 5.500L17.500 3M3 11.500L6.500 14M21 11.500L17.500 14"/></svg></button>
                        <button class="emoji" type="button" aria-label="Pirate flag"><svg viewBox="0 0 24 17"><path fill="#31373d" d="M0 0h24v17H0z"/><path stroke="#eee" stroke-width="1.6" stroke-linecap="round" d="M5 10.5l14 4M19 10.5l-14 4"/><path fill="#eee" d="M8 5.5a4 4 0 0 1 8 0q0 2-2 3v1.5h-4V8.5q-2-1-2-3z"/><circle cx="10.5" cy="6" r="1" fill="#31373d"/><circle cx="13.5" cy="6" r="1" fill="#31373d"/></svg></button>

                        <button class="emoji" type="button" aria-label="Rainbow flag"><svg viewBox="0 0 24 17"><path fill="#ff000e" d="M0 0h24v3H0z"/><path fill="#ff7a1f" d="M0 3h24v3H0z"/><path fill="#ffd41b" d="M0 6h24v2.5H0z"/><path fill="#0a8a3c" d="M0 8.5h24v3H0z"/><path fill="#3558a0" d="M0 11.5h24v3H0z"/><path fill="#88406f" d="M0 14.5h24V17H0z"/></svg></button>
                        <button class="emoji" type="button" aria-label="Russia"><svg viewBox="0 0 24 17"><path fill="#22408c" d="M0 5.7h24v6H0z"/><path fill="#ce2028" d="M0 11.5h24V17H0z"/></svg></button>
                        <button class="emoji pole" type="button" aria-label="Triangular flag"><svg viewBox="0 0 24 24"><path fill="#dd2e44" d="M7 1l15 6.5L7 14z"/><path fill="#66757f" d="M5 1q1.5-1.5 3 0v22q-1.5 1.5-3 0z"/></svg></button>
                        <button class="emoji" type="button" aria-label="U.S. Outlying Islands"><svg viewBox="0 0 24 17"><use href="#usa"/></svg></button>
                        <button class="emoji pole" type="button" aria-label="Black flag"><svg viewBox="0 0 24 24"><path fill="#31373d" d="M4 2q4 2 9 0t9 0v14q-4-1-9 .5T4 17z"/><path fill="#8899a6" d="M2 2q1.5-1.5 3 0v21q-1.5 1.5-3 0z"/></svg></button>
                        <button class="emoji pole" type="button" aria-label="White flag"><svg viewBox="0 0 24 24"><path fill="#e1e8ed" d="M4 2q4 2 9 0t9 0v14q-4-1-9 .5T4 17z"/><path fill="#8899a6" d="M2 2q1.5-1.5 3 0v21q-1.5 1.5-3 0z"/></svg></button>
                    </div>
                </div>
            </section>
        </main>

        <footer class="actions">
            <button class="btn" type="button">← Back</button>
            <button class="btn primary" type="button">I'm Ready →</button>
        </footer>
    </div>

</body>
</html>
```
FILE: styles.css
```css
* {
    margin: 0;
    padding: 0;
    box-sizing: border-box;
}

body {
    font-family: Inter, "Liberation Sans", sans-serif;
    background: #fff;
    color: #0f172a;
}

button,
input {
    font: inherit;
    color: inherit;
    background: none;
    border: none;
    outline: none;
}

button {
    cursor: pointer;
}

.sprite {
    display: none;
}

.page {
    padding: 14px 4px 8px 0;
}

/* Heading */
.header {
    text-align: center;
}

.header h1 {
    font-size: 34px;
    line-height: 40px;
    font-weight: 700;
}

.header p {
    margin-top: 15px;
    font-size: 19px;
    line-height: 28px;
    font-weight: 300;
    color: #475569;
}

.picker {
    display: flex;
    flex-wrap: wrap;
    justify-content: space-between;
    align-items: flex-start;
    gap: 32px;
    margin-top: 56px;
    padding: 0 15px 0 21px;
}

/* Icon preview and colours */
.design {
    display: flex;
    flex-direction: column;
    align-items: center;
    width: 288px;
}

.app-icon {
    display: flex;
    justify-content: center;
    align-items: center;
    width: 128px;
    height: 128px;
    border-radius: 40px;
    background: #fff;
    box-shadow: 0 1px 2px rgba(0, 0, 0, 0.25);
}

.random {
    display: flex;
    align-items: center;
    gap: 8px;
    margin-top: 14px;
    font-size: 14px;
    line-height: 24px;
    color: #4b4b4b;
}

.swatches {
    display: grid;
    grid-template-columns: repeat(8, 24px);
    gap: 18px 12px;
    margin: 16px 0 18px;
}

.swatch {
    height: 24px;
    border: 2px solid #d1d5db;
    border-radius: 50%;
}

.white { background: #ffffff; }
.black { background: #000000; }
.silver { background: #abb8c3; }
.gray { background: #999999; }
.slate { background: #607d8b; }
.deep-orange { background: #ff5722; }
.orange { background: #ff9800; }
.amber { background: #ffc107; }
.yellow { background: #ffeb3b; }
.emerald { background: #00d084; }
.mint { background: #7bdcb5; }
.lime { background: #8bc34a; }
.green { background: #4caf50; }
.teal { background: #009688; }
.cyan { background: #00bcd4; }
.sky { background: #03a9f4; }
.blue { background: #2196f3; }
.indigo { background: #3f51b5; }
.deep-purple { background: #673ab7; }
.purple { background: #9c27b0; }
.violet { background: #9900ef; }
.crimson { background: #eb144c; }
.pink { background: #e91e63; }
.red { background: #f44336; }

.hex {
    display: flex;
    align-items: center;
    gap: 14px;
    width: 100%;
    height: 24px;
    padding: 0 7px;
    border: 2px solid #d1d5db;
    border-radius: 12px;
    font-size: 16px;
    line-height: 20px;
    color: #64748b;
}

.hex input {
    flex: 1;
    min-width: 0;
}

/* Emoji picker */
.emoji-panel {
    width: 338px;
    border: 1px solid #d9d9d9;
    border-radius: 5px;
}

.tabs {
    display: flex;
    padding: 0 6px;
    border-bottom: 1px solid #d9d9d9;
}

.tab {
    display: flex;
    flex: 1;
    justify-content: center;
    align-items: center;
    height: 42px;
    border-bottom: 3px solid transparent;
    border-top: 3px solid transparent;
    fill: #858585;
}

.tab svg {
    width: 18px;
    height: 18px;
}

.tab.active {
    border-bottom-color: #5a44ff;
    fill: #5a44ff;
}

.search {
    display: flex;
    align-items: center;
    height: 32px;
    margin: 6px 6px 0;
    padding: 0 9px;
    border: 1px solid #d9d9d9;
    border-radius: 5px;
    font-family: "Open Sans", "Noto Sans", sans-serif;
    font-size: 15px;
}

.search input {
    flex: 1;
    min-width: 0;
}

.search input::placeholder {
    color: #9ca3af;
}

.list {
    position: relative;
    height: 270px;
    overflow: hidden;
}

.category {
    position: absolute;
    top: 0;
    left: 0;
    right: 0;
    font-family: "Open Sans", "Noto Sans", sans-serif;
    font-size: 15px;
    line-height: 29px;
    font-weight: 400;
    text-align: center;
    color: #222427;
    background: rgba(255, 255, 255, 0.95);
}

.emojis {
    display: flex;
    flex-wrap: wrap;
    justify-content: center;
    align-content: flex-end;
    height: 100%;
    padding: 0 6px 6px;
}

.emoji {
    display: flex;
    justify-content: center;
    align-items: center;
    width: 36px;
    height: 36px;
    padding-bottom: 1px;
}

.emoji svg {
    width: 24px;
    height: 17px;
    border-radius: 3px;
    background: #eee;
}

.emoji.narrow svg {
    width: 17px;
}

.emoji.pole {
    padding-bottom: 0;
}

.emoji.pole svg {
    height: 24px;
    border-radius: 0;
    background: none;
}

/* Bottom buttons */
.actions {
    display: flex;
    justify-content: center;
    gap: 32px;
    margin-top: 24px;
}

.btn {
    width: 144px;
    height: 38px;
    border: 1px solid #64748b;
    border-radius: 4px;
    font-size: 14px;
    font-weight: 600;
    color: #64748b;
}

.btn.primary {
    border-color: #5a44ff;
    background: #5a44ff;
    color: #fff;
}
```
